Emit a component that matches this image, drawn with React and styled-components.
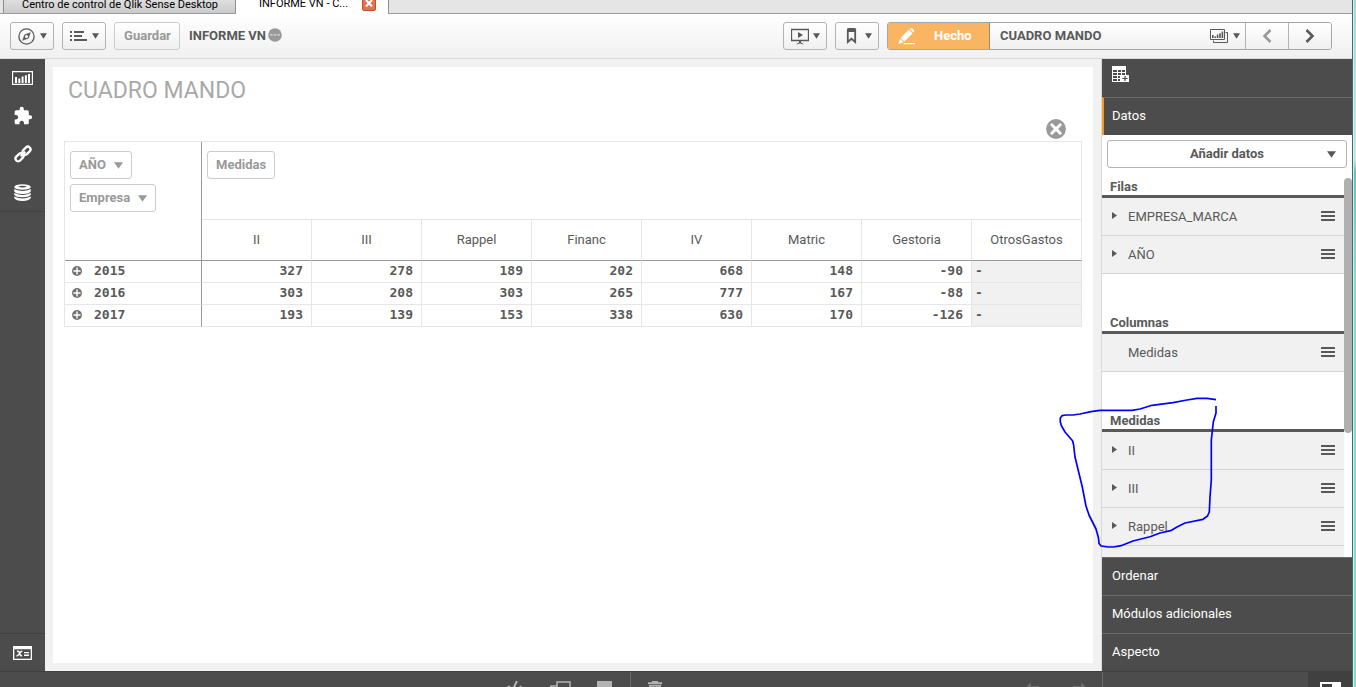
import React from 'react'
import styled, { createGlobalStyle } from 'styled-components'
import { MdExtension } from 'react-icons/md'

const colors = {
  text: '#595959',
  muted: '#999999',
  dark: '#4c4c4c',
  darker: '#404040',
  line: '#e6e6e6',
  pale: '#f1f1f1',
  orange: '#f9b562',
}

const GlobalStyle = createGlobalStyle`
  * {
    box-sizing: border-box;
  }
  body {
    margin: 0;
    overflow: hidden;
    background: ${colors.pale};
    color: ${colors.text};
    font-family: Roboto, 'Liberation Sans', sans-serif;
    font-size: 13px;
    line-height: 16px;
  }
  button {
    font: inherit;
    color: inherit;
    cursor: pointer;
  }
  svg {
    display: block;
    flex: none;
  }
`

const Window = styled.div`
  display: flex;
  height: 100vh;
`

const Page = styled.div`
  display: flex;
  flex: 1;
  flex-direction: column;
  min-width: 0;
`

const WindowEdge = styled.div`
  width: 4px;
  border-left: 1px solid #3f6d6a;
  background: linear-gradient(#9ddcda 0, #b9ebe9 160px, #63c2c0 172px, #86d8d5 270px, #86d8d5 100%);
  box-shadow: inset 1px 0 0 #d3f1f0;
`

/* Browser tabs */

const TabStrip = styled.nav`
  display: flex;
  align-items: stretch;
  height: 14px;
  border-bottom: 1px solid #9b9b9b;
  background: #e5e5e5;
  font-family: Roboto, 'Liberation Sans', sans-serif;
  font-size: 11px;
  color: #000;
`

const BrowserTab = styled.button`
  display: flex;
  align-items: flex-end;
  justify-content: space-between;
  width: ${props => (props.$active ? 153 : 233)}px;
  height: ${props => (props.$active ? 14 : 13)}px;
  margin-left: ${props => (props.$active ? 0 : 3)}px;
  padding: ${props => (props.$active ? '0 12px 3px 23px' : '0 18px 1px')};
  overflow: hidden;
  border: solid #8f8f8f;
  border-width: ${props => (props.$active ? '0 1px 0 0' : '0 1px')};
  background: ${props => (props.$active ? '#fff' : 'linear-gradient(#dedede, #cbcbcb)')};
  line-height: 14px;
  white-space: nowrap;
`

const CloseBox = styled.span`
  display: flex;
  align-items: flex-end;
  justify-content: center;
  width: 14px;
  height: 14px;
  padding-bottom: 3px;
  border: 1px solid #cf4a2c;
  border-radius: 2px;
  background: #e27350;
`

/* Toolbar */

const Toolbar = styled.header`
  display: flex;
  align-items: flex-start;
  justify-content: space-between;
  height: 45px;
  padding: 8px 20px 0 10px;
  border-bottom: 1px solid #d9d9d9;
  background: linear-gradient(#fff, #f0f0f0);
  font-weight: 700;
`

const ToolGroup = styled.div`
  display: flex;
  align-items: center;
  gap: 8px;
`

const ToolButton = styled.button`
  display: flex;
  align-items: center;
  justify-content: ${props => (props.$label ? 'center' : 'space-between')};
  width: ${props => (props.$label ? 66 : 44)}px;
  height: 28px;
  padding: 0 6px 0 7px;
  border: 1px solid ${props => (props.disabled ? '#cccccc' : '#b3b3b3')};
  border-radius: 3px;
  background: linear-gradient(#fff, #f0f0f0);
  color: ${props => (props.disabled ? colors.muted : colors.text)};
`

const AppName = styled.span`
  display: flex;
  align-items: center;
  gap: 2px;
  padding-left: 1px;
`

const SheetBar = styled.div`
  display: flex;
  height: 28px;
  border: 1px solid #a6a6a6;
  border-radius: 3px;
  overflow: hidden;
`

const DoneButton = styled.button`
  display: flex;
  align-items: center;
  gap: 19px;
  width: 102px;
  padding: 0 0 0 10px;
  border: 0;
  border-right: 1px solid #a08a6a;
  background: ${colors.orange};
  color: #fff;
`

const SheetPicker = styled.button`
  display: flex;
  align-items: center;
  justify-content: space-between;
  width: 256px;
  padding: 0 5px 0 10px;
  border: 0;
  border-right: 1px solid #b3b3b3;
  background: linear-gradient(#fff, #f0f0f0);
`

const PickerIcons = styled.span`
  display: flex;
  align-items: center;
  gap: 5px;
`

const PageButton = styled.button`
  display: flex;
  align-items: center;
  justify-content: center;
  width: ${props => (props.disabled ? 43 : 42)}px;
  padding: 0;
  border: 0;
  border-right: ${props => (props.disabled ? '1px solid #b3b3b3' : '0')};
  background: linear-gradient(#fff, #f0f0f0);
  color: ${props => (props.disabled ? colors.muted : colors.text)};
`

/* Body */

const Body = styled.div`
  display: flex;
  flex: 1;
  min-height: 0;
`

const Rail = styled.nav`
  display: flex;
  flex-direction: column;
  justify-content: space-between;
  width: 45px;
  background: ${colors.dark};
`

const RailGroup = styled.div`
  border: solid ${colors.darker};
  border-width: ${props => (props.$bottom ? '1px 0 0' : '0 0 1px')};
`

const RailButton = styled.button`
  display: flex;
  align-items: center;
  justify-content: center;
  width: 45px;
  height: 38px;
  padding: 0;
  border: 0;
  background: none;
  color: #fff;

  ${RailGroup}:last-child & {
    height: 37px;
  }
`

const Sheet = styled.main`
  flex: 1;
  min-width: 0;
  margin: 8px;
  padding: 12px 11px 0;
  background: #fff;
`

const SheetTitle = styled.h1`
  margin: 0 4px;
  color: #a9a9a9;
  font-size: 23px;
  font-weight: 400;
  line-height: 24px;
`

const CloseRow = styled.div`
  display: flex;
  justify-content: flex-end;
  padding: 16px 16px 2px;
`

const IconButton = styled.button`
  display: flex;
  padding: 0;
  border: 0;
  background: none;
  color: ${colors.text};
`

const Pivot = styled.table`
  width: 100%;
  table-layout: fixed;
  border: solid ${colors.line};
  border-width: 1px 0 0 1px;
  border-spacing: 0;
`

const LabelCol = styled.col`
  width: 137px;
`

const CornerCell = styled.td`
  padding: 9px 5px;
  border-right: 1px solid #999;
  border-bottom: 1px solid #999;
  vertical-align: top;
`

const MeasuresCell = styled.td`
  height: 78px;
  padding: 9px 5px;
  border-right: 1px solid ${colors.line};
  border-bottom: 1px solid ${colors.line};
  vertical-align: top;
`

const ColumnHead = styled.th`
  height: 41px;
  padding: 0;
  border-right: 1px solid ${colors.line};
  border-bottom: 1px solid #999;
  font-weight: 400;
`

const DimensionList = styled.div`
  display: flex;
  flex-direction: column;
  align-items: flex-start;
  gap: 5px;
`

const DimensionButton = styled.button`
  display: flex;
  align-items: center;
  gap: 8px;
  height: 28px;
  padding: 0 8px;
  border: 1px solid #cccccc;
  border-radius: 3px;
  background: #fff;
  color: ${colors.muted};
  font-weight: 700;
`

const figures = `
  height: 22px;
  font-family: 'DejaVu Sans Mono', monospace;
  font-weight: 700;
  line-height: 16px;
`

const RowHead = styled.th`
  ${figures}
  padding: 0 7px 2px;
  border-right: 1px solid #999;
  border-bottom: 1px solid ${colors.line};
`

const RowLabel = styled.span`
  display: flex;
  align-items: center;
  gap: 12px;
`

const ValueCell = styled.td`
  ${figures}
  padding: 0 8px 2px 3px;
  border-right: 1px solid ${colors.line};
  border-bottom: 1px solid ${colors.line};
  background: ${props => (props.$empty ? colors.pale : '#fff')};
  text-align: ${props => (props.$empty ? 'left' : 'right')};
`

/* Properties panel */

const Panel = styled.aside`
  position: relative;
  display: flex;
  flex-direction: column;
  width: 251px;
  border-left: 1px solid #d9d9d9;
  background: #fff;
`

const PanelHeader = styled.div`
  height: 38px;
  padding: 7px 10px;
  background: ${colors.dark};
`

const Section = styled.button`
  flex: none;
  height: 38px;
  padding: 0 10px 2px ${props => (props.$open ? 8 : 10)}px;
  border: 0;
  border-top: 1px solid #6b6b6b;
  border-left: ${props => (props.$open ? '2px solid #f8981d' : '0')};
  background: ${colors.dark};
  color: #fff;
  text-align: left;
`

const AddData = styled.button`
  display: flex;
  flex: none;
  align-items: center;
  height: 28px;
  margin: 5px 5px 0;
  padding: 0 10px 0 19px;
  border: 1px solid #b3b3b3;
  border-radius: 3px;
  background: #fff;
  font-weight: 700;
`

const AddLabel = styled.span`
  flex: 1;
  text-align: center;
`

const Scroller = styled.div`
  display: flex;
  flex: 1;
  min-height: 0;
  overflow: hidden;
`

const Groups = styled.div`
  flex: 1;
  display: flex;
  flex-direction: column;
  gap: 41px;
  padding-top: 11px;
`

const Group = styled.section`
  &:last-child {
    flex: 1;
    background: ${colors.pale};
  }
`

const Thumb = styled.div`
  width: 8px;
  height: 255px;
  margin-top: 10px;
  border-radius: 4px;
  background: #b0b0b0;
`

const GroupTitle = styled.h2`
  margin: 0;
  padding-left: 8px;
  border-bottom: 3px solid ${colors.text};
  background: #fff;
  font-size: 13px;
  line-height: 16px;
`

const Items = styled.ul`
  margin: 0;
  padding: 0;
  list-style: none;
`

const Item = styled.li`
  display: flex;
  align-items: center;
  height: 38px;
  padding: 0 9px 0 10px;
  border-bottom: 1px solid #d4d4d4;
  background: ${colors.pale};
`

const ItemLabel = styled.span`
  flex: 1;
  margin-left: ${props => (props.$plain ? 16 : 11)}px;
`

const Annotation = styled.svg`
  position: absolute;
  top: 336px;
  left: -47px;
  pointer-events: none;
`

/* Footer */

const Footer = styled.footer`
  display: flex;
  flex: none;
  justify-content: space-between;
  height: 16px;
  overflow: hidden;
  border-top: 1px solid ${colors.darker};
  background: ${colors.dark};
`

const FooterTools = styled.div`
  display: flex;
  flex: 1;
  justify-content: center;
  gap: 26px;
  padding-top: 9px;
  padding-left: 143px;
`

const FooterDivider = styled.div`
  width: 1px;
  height: 16px;
  margin: -9px -9px 0 -8px;
  background: #686868;
`

const FooterHistory = styled.div`
  display: flex;
  gap: 34px;
  padding: 10px 15px 0 0;
`

const FooterPanel = styled.div`
  display: flex;
  justify-content: flex-end;
  width: 250px;
  border-left: 1px solid #686868;
`

const PanelToggle = styled.button`
  display: flex;
  justify-content: center;
  width: 44px;
  padding: 10px 0 0;
  border: 0;
  background: ${colors.darker};
`

/* Icons */

const Caret = ({ width = 7, height = 6 }) => (
  <svg width={width} height={height} viewBox="0 0 8 6" preserveAspectRatio="none">
    <path d="M0 0.3H8L4 5.8Z" fill="currentColor" />
  </svg>
)

const RightCaret = () => (
  <svg width="5" height="9" viewBox="0 0 5 9">
    <path d="M0 0L5 3.5L0 7Z" fill="currentColor" />
  </svg>
)

const CompassIcon = () => (
  <svg width="17" height="17" viewBox="0 0 17 17" fill="none" stroke="currentColor">
    <circle cx="8.5" cy="8.5" r="7.6" strokeWidth="1.3" />
    <path d="M12.3 4.7L10.3 10.2L4.7 12.3L6.7 6.8Z" fill="currentColor" strokeWidth="0.6" />
    <circle cx="8.5" cy="8.5" r="1.5" fill="#fff" stroke="none" />
  </svg>
)

const ListIcon = () => (
  <svg width="17" height="12" viewBox="0 0 17 12" fill="currentColor">
    <path d="M0 1h2v2H0zM0 5h2v2H0zM0 9h2v2H0zM4 1h10v2H4zM4 5h8v2H4zM4 9h13v2H4z" />
  </svg>
)

const DotsIcon = () => (
  <svg width="14" height="16" viewBox="0 0 14 16">
    <circle cx="7" cy="7" r="6.8" fill="#999" />
    <path d="M2 6.2h2.6v1.4H2zM5.7 6.2h2.6v1.4H5.7zM9.4 6.2H12v1.4H9.4z" fill="#ddd" />
  </svg>
)

const PresentIcon = () => (
  <svg width="18" height="17" viewBox="0 0 18 17">
    <path d="M0.5 1.5H17.5V12.5H0.5Z" fill="none" stroke="currentColor" strokeWidth="1.3" />
    <path d="M7 4L12 7L7 10ZM8 12.5h2v2l3 1.8h-2l-2-1l-2 1H5l3-1.8z" fill="currentColor" />
  </svg>
)

const BookmarkIcon = () => (
  <svg width="17" height="16" viewBox="0 0 17 16">
    <path d="M5 0H12L13 1V4H4V1Z" fill="currentColor" />
    <path d="M4.8 2V14L8.5 10.8L12.2 14V1" fill="none" stroke="currentColor" strokeWidth="1.8" />
  </svg>
)

const PencilIcon = () => (
  <svg width="17" height="17" viewBox="0 0 17 17" fill="#fff">
    <path d="M11.6 0.8L15.4 4.6L16 3.6Q16.6 2.6 15.4 1.4Q14 0 12.8 0.3ZM10.8 1.6L14.5 5.4L6.3 13.6L2.6 9.9ZM2 10.7L5.5 14.2L0.3 16Z" />
    <path d="M6 15h11v1.2H5z" />
  </svg>
)

const SheetsIcon = () => (
  <svg width="18" height="14" viewBox="0 0 18 14">
    <path d="M15.5 3.5H17.5V13.5H3.5V11.5" fill="none" stroke="currentColor" />
    <path d="M0.5 0.5H14.5V10.5H0.5Z" fill="none" stroke="currentColor" />
    <path d="M2 6h1.6v3H2zM4.4 7.4H6V9H4.4zM6.8 5.5h1.6V9H6.8zM9.2 4.3h1.6V9H9.2zM11.6 2.5h1.6V9h-1.6z" fill="currentColor" />
  </svg>
)

const ChevronIcon = ({ flip }) => (
  <svg width="10" height="14" viewBox="0 0 10 14">
    <path d={flip ? 'M1.5 1L7.5 7L1.5 13' : 'M8.5 1L2.5 7L8.5 13'} fill="none" stroke="currentColor" strokeWidth="2.6" />
  </svg>
)

const ChartIcon = () => (
  <svg width="21" height="14" viewBox="0 0 21 14">
    <path d="M0.5 0.5H20.5V13.5H0.5Z" fill="none" stroke="#fff" strokeWidth="1.3" />
    <path d="M3 6h2v6H3zM6.3 7.5h2V12h-2zM9.6 5.5h2V12h-2zM12.9 4.3h2V12h-2zM16 3h2v9h-2z" fill="#fff" />
  </svg>
)

const LinkIcon = () => (
  <svg width="18" height="18" viewBox="0 0 18 18" fill="none" stroke="#fff" strokeWidth="2.3">
    <rect x="8" y="3" width="9" height="5.4" rx="2.7" transform="rotate(-45 12.5 5.7)" />
    <rect x="1" y="9.6" width="9" height="5.4" rx="2.7" transform="rotate(-45 5.5 12.3)" />
    <path d="M6.6 11.4L11.4 6.6" strokeWidth="2" />
  </svg>
)

const DatabaseIcon = () => (
  <svg width="17" height="17" viewBox="0 0 17 17" fill="#fff">
    <ellipse cx="8.5" cy="3" rx="8.3" ry="2.8" />
    <path d="M0.2 5Q8.5 9 16.8 5V7.4Q15 9.9 8.5 9.9T0.2 7.4ZM0.2 9Q8.5 13 16.8 9V10.8Q15 13.3 8.5 13.3T0.2 10.8ZM0.2 12.6Q8.5 16.4 16.8 12.6V14Q15 16.9 8.5 16.9T0.2 14Z" />
    <path d="M4 2.5Q8.5 1 13 2.5Q8.5 4.4 4 2.5Z" fill="#4c4c4c" />
  </svg>
)

const VariableIcon = () => (
  <svg width="19" height="14" viewBox="0 0 19 14">
    <path d="M0 0H19V14H0ZM1.3 3.2V12.7H17.7V3.2Z" fill="#fff" fillRule="evenodd" />
    <path d="M4 5.5Q6 4.7 6.5 6.8Q7 9.8 9 9.8M9.3 5.3Q7.5 5.5 6.3 7.7Q5 10 3.5 10" fill="none" stroke="#fff" strokeWidth="1.5" />
    <path d="M11 6h5v1.3h-5zM11 8.6h5v1.3h-5z" fill="#fff" />
  </svg>
)

const AddTableIcon = () => (
  <svg width="17" height="17" viewBox="0 0 17 17">
    <path d="M0 0H14V9H9V16H0Z" fill="#fff" />
    <path d="M1 4h4v2H1zM6 4h3v2H6zM10 4h3v2h-3zM1 7h4v2H1zM6 7h3v2H6zM10 7h3v2h-3zM1 10h4v2H1zM6 10h2v2H6zM1 13h4v2H1zM6 13h2v2H6z" fill="#4c4c4c" />
    <path d="M9 9h8v7H9z" fill="#fff" />
    <path d="M12.4 10h1.2v1.9h2v1.2h-2V15h-1.2v-1.9h-2v-1.2h2z" fill="#4c4c4c" />
  </svg>
)

const ClearIcon = () => (
  <svg width="20" height="20" viewBox="0 0 20 20">
    <circle cx="10" cy="10" r="9.9" fill="#999" />
    <path d="M5.8 5.8L14.2 14.2M14.2 5.8L5.8 14.2" stroke="#fff" strokeWidth="3" strokeLinecap="round" />
  </svg>
)

const ExpandIcon = () => (
  <svg width="10" height="10" viewBox="0 0 10 10">
    <circle cx="5" cy="5" r="5" fill="#737373" />
    <path d="M5 1.4V8.6M1.4 5H8.6" stroke="#fff" strokeWidth="1.4" />
  </svg>
)

const HandleIcon = () => (
  <svg width="14" height="12" viewBox="0 0 14 12" fill="currentColor">
    <path d="M0 0h14v2H0zM0 4h14v2H0zM0 8h14v2H0z" />
  </svg>
)

const CutIcon = () => (
  <svg width="18" height="16" viewBox="0 0 18 16" fill="none" stroke="#b3b3b3" strokeWidth="2">
    <path d="M11 0L6 10M2 5L6 8M15 5L13 9" />
  </svg>
)

const CopyIcon = () => (
  <svg width="21" height="16" viewBox="0 0 21 16" fill="none" stroke="#b3b3b3" strokeWidth="1.5">
    <path d="M7 9V1H20V12M7 5H1V14" />
  </svg>
)

const PasteIcon = () => (
  <svg width="15" height="16" viewBox="0 0 15 16">
    <path d="M0 0H15V16H0Z" fill="#b3b3b3" />
  </svg>
)

const TrashIcon = () => (
  <svg width="14" height="16" viewBox="0 0 14 16" fill="#b3b3b3">
    <path d="M4 0H10V1.2H14V3.2H0V1.2H4ZM1 4H13L12 16H2Z" />
    <path d="M4 5v9M7 5v9M10 5v9" stroke="#4c4c4c" />
  </svg>
)

const HistoryIcon = ({ forward }) => (
  <svg width="14" height="12" viewBox="0 0 14 12">
    <path d={forward ? 'M8 0L14 6L8 12V8H0V4H8Z' : 'M6 0L0 6L6 12V8H14V4H6Z'} fill="#6b6b6b" />
  </svg>
)

const PanelIcon = () => (
  <svg width="21" height="14" viewBox="0 0 21 14">
    <path d="M0 0H21V14H0ZM2 2V12H12V2Z" fill="#fff" fillRule="evenodd" />
  </svg>
)

/* Data */

const measures = ['II', 'III', 'Rappel', 'Financ', 'IV', 'Matric', 'Gestoria', 'OtrosGastos']

const rows = [
  { year: '2015', values: ['327', '278', '189', '202', '668', '148', '-90', '-'] },
  { year: '2016', values: ['303', '208', '303', '265', '777', '167', '-88', '-'] },
  { year: '2017', values: ['193', '139', '153', '338', '630', '170', '-126', '-'] },
]

const groups = [
  { title: 'Filas', items: ['EMPRESA_MARCA', 'AÑO'] },
  { title: 'Columnas', items: ['Medidas'], plain: true },
  { title: 'Medidas', items: ['II', 'III', 'Rappel'] },
]

const BrowserTabs = () => (
  <TabStrip>
    <BrowserTab>Centro de control de Qlik Sense Desktop</BrowserTab>
    <BrowserTab $active>
      INFORME VN - C...
      <CloseBox>
        <svg width="8" height="7" viewBox="0 0 8 7">
          <path d="M1 0L7 6.5M7 0L1 6.5" stroke="#fff" strokeWidth="2" />
        </svg>
      </CloseBox>
    </BrowserTab>
  </TabStrip>
)

const TopBar = () => (
  <Toolbar>
    <ToolGroup>
      <ToolButton aria-label="Navegación"><CompassIcon /><Caret /></ToolButton>
      <ToolButton aria-label="Menú"><ListIcon /><Caret /></ToolButton>
      <ToolButton $label disabled>Guardar</ToolButton>
      <AppName>INFORME VN<DotsIcon /></AppName>
    </ToolGroup>
    <ToolGroup>
      <ToolButton aria-label="Historias"><PresentIcon /><Caret /></ToolButton>
      <ToolButton aria-label="Marcadores"><BookmarkIcon /><Caret /></ToolButton>
      <SheetBar>
        <DoneButton><PencilIcon />Hecho</DoneButton>
        <SheetPicker>
          CUADRO MANDO
          <PickerIcons><SheetsIcon /><Caret /></PickerIcons>
        </SheetPicker>
        <PageButton disabled aria-label="Hoja anterior"><ChevronIcon /></PageButton>
        <PageButton aria-label="Hoja siguiente"><ChevronIcon flip /></PageButton>
      </SheetBar>
    </ToolGroup>
  </Toolbar>
)

const AssetRail = () => (
  <Rail>
    <RailGroup>
      <RailButton aria-label="Gráficos"><ChartIcon /></RailButton>
      <RailButton aria-label="Extensiones"><MdExtension size={20} /></RailButton>
      <RailButton aria-label="Elementos maestros"><LinkIcon /></RailButton>
      <RailButton aria-label="Campos"><DatabaseIcon /></RailButton>
    </RailGroup>
    <RailGroup $bottom>
      <RailButton aria-label="Variables"><VariableIcon /></RailButton>
    </RailGroup>
  </Rail>
)

const PivotTable = () => (
  <Pivot>
    <colgroup>
      <LabelCol />
      {measures.map(name => <col key={name} />)}
    </colgroup>
    <thead>
      <tr>
        <CornerCell rowSpan={2}>
          <DimensionList>
            <DimensionButton>AÑO<Caret width={9} height={7} /></DimensionButton>
            <DimensionButton>Empresa<Caret width={9} height={7} /></DimensionButton>
          </DimensionList>
        </CornerCell>
        <MeasuresCell colSpan={measures.length}>
          <DimensionButton>Medidas</DimensionButton>
        </MeasuresCell>
      </tr>
      <tr>
        {measures.map(name => <ColumnHead key={name} scope="col">{name}</ColumnHead>)}
      </tr>
    </thead>
    <tbody>
      {rows.map(row => (
        <tr key={row.year}>
          <RowHead scope="row">
            <RowLabel>
              <IconButton aria-label={`Expandir ${row.year}`}><ExpandIcon /></IconButton>
              {row.year}
            </RowLabel>
          </RowHead>
          {row.values.map((value, i) => (
            <ValueCell key={measures[i]} $empty={value === '-'}>{value}</ValueCell>
          ))}
        </tr>
      ))}
    </tbody>
  </Pivot>
)

const Properties = () => (
  <Panel>
    <PanelHeader><AddTableIcon /></PanelHeader>
    <Section $open>Datos</Section>
    <AddData><AddLabel>Añadir datos</AddLabel><Caret width={9} height={7} /></AddData>
    <Scroller>
      <Groups>
        {groups.map(group => (
          <Group key={group.title}>
            <GroupTitle>{group.title}</GroupTitle>
            <Items>
              {group.items.map(item => (
                <Item key={item}>
                  {!group.plain && <RightCaret />}
                  <ItemLabel $plain={group.plain}>{item}</ItemLabel>
                  <HandleIcon />
                </Item>
              ))}
            </Items>
          </Group>
        ))}
      </Groups>
      <Thumb />
    </Scroller>
    <Section>Ordenar</Section>
    <Section>Módulos adicionales</Section>
    <Section>Aspecto</Section>
    <Annotation width="170" height="160" viewBox="0 0 170 160" fill="none" stroke="#0000ff" strokeWidth="1.7" strokeLinejoin="round">
      <path d="M161 4.7L152 3.4H142L132 5L118 7.7L97 10.3L85 14L77 15.3H45L36 16.6L25 19L18 20H11L7 20.7L5.3 23V27L6.5 31L10 37L17.7 46L18.6 50L20 62L27.3 92L31 111L34 120L41 134L43.5 143L44 148.3L46 151L53 152H59L66 150.7L78 146L95 141.7L105 138L115.7 135.7L122 132L130 128L148 124.3L152.5 121L154.3 117L155 102L156.3 85V45L158.3 27L161 18V11" />
    </Annotation>
  </Panel>
)

const BottomBar = () => (
  <Footer>
    <FooterTools>
      <CutIcon />
      <CopyIcon />
      <PasteIcon />
      <FooterDivider />
      <TrashIcon />
    </FooterTools>
    <FooterHistory>
      <HistoryIcon />
      <HistoryIcon forward />
    </FooterHistory>
    <FooterPanel>
      <PanelToggle aria-label="Mostrar propiedades"><PanelIcon /></PanelToggle>
    </FooterPanel>
  </Footer>
)

const App = () => (
  <Window>
    <GlobalStyle />
    <Page>
      <BrowserTabs />
      <TopBar />
      <Body>
        <AssetRail />
        <Sheet>
          <SheetTitle>CUADRO MANDO</SheetTitle>
          <CloseRow>
            <IconButton aria-label="Cerrar"><ClearIcon /></IconButton>
          </CloseRow>
          <PivotTable />
        </Sheet>
        <Properties />
      </Body>
      <BottomBar />
    </Page>
    <WindowEdge />
  </Window>
)

export default App
